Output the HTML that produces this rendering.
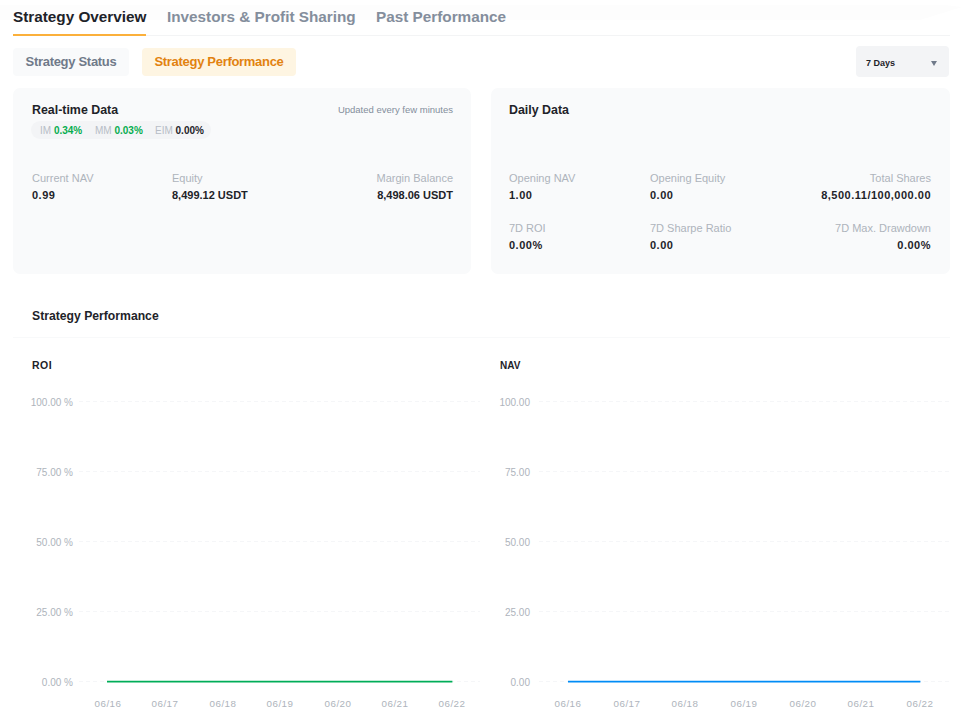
<!DOCTYPE html>
<html><head><meta charset="utf-8">
<style>
*{margin:0;padding:0;box-sizing:border-box}
html,body{width:962px;height:723px;overflow:hidden;background:#fff;font-family:"Liberation Sans",sans-serif;color:#1E2329}
.a{position:absolute;white-space:nowrap}
.tab{font-size:15.3px;font-weight:bold;top:7px;line-height:20px}
.btn{height:28px;border-radius:4px;font-size:13px;letter-spacing:-0.3px;font-weight:bold;line-height:28px;text-align:center;top:48px}
.card{background:#F9FAFB;border-radius:7px;top:88px;height:186px}
.ttl{font-size:12.4px;font-weight:bold;line-height:16px}
.lbl{font-size:11px;color:#AEB4BC;line-height:14px}
.val{font-size:11px;font-weight:bold;color:#1E2329;line-height:14px}
.num{letter-spacing:0.5px}
.r{text-align:right}
.ax{font-size:10px;color:#AEB4BC;line-height:12px;margin-top:2px}
.xl{font-size:9.8px;letter-spacing:0.45px;color:#AEB4BC;line-height:12px;width:40px;text-align:center;top:698px}
.grid{height:1px;background:repeating-linear-gradient(to right,#F5F6F8 0 4px,transparent 4px 7px)}
</style></head><body>
<div class="a" style="left:0;top:5px;width:962px;height:15px;background:#FDFDFD;clip-path:polygon(0 0,945px 0,962px 2px,920px 15px,0 15px)"></div>
<div class="a tab" style="left:13px;color:#1E2329">Strategy Overview</div>
<div class="a tab" style="left:167px;color:#848E9C">Investors &amp; Profit Sharing</div>
<div class="a tab" style="left:376px;color:#848E9C">Past Performance</div>
<div class="a" style="left:13px;top:35px;width:937px;height:1px;background:#F3F4F5"></div>
<div class="a" style="left:13px;top:34px;width:133px;height:2px;background:#FBB03B"></div>

<div class="a btn" style="left:13px;width:116px;background:#F9FAFB;color:#707A8A">Strategy Status</div>
<div class="a btn" style="left:142px;width:154px;background:#FEF5E2;color:#E2820F">Strategy Performance</div>

<div class="a" style="left:856px;top:46px;width:93px;height:31px;background:#F3F4F6;border-radius:4px"></div>
<div class="a" style="left:866px;top:57px;font-size:9px;font-weight:bold;line-height:12px">7 Days</div>
<div class="a" style="left:931px;top:60.5px;width:0;height:0;border-left:3.5px solid transparent;border-right:3.5px solid transparent;border-top:5px solid #707A8A"></div>

<!-- card 1 -->
<div class="a card" style="left:13px;width:458px"></div>
<div class="a ttl" style="left:32px;top:102px">Real-time Data</div>
<div class="a r" style="right:509px;top:104px;font-size:9.5px;color:#848E9C;line-height:12px">Updated every few minutes</div>
<div class="a" style="left:31px;top:121px;width:180px;height:18px;background:#F3F4F6;border-radius:9px"></div>
<div class="a" style="left:40px;top:125px;font-size:10px;line-height:12px"><span style="color:#B7BDC6">IM </span><span style="color:#06AD4F;font-weight:bold">0.34%</span></div>
<div class="a" style="left:95px;top:125px;font-size:10px;line-height:12px"><span style="color:#B7BDC6">MM </span><span style="color:#06AD4F;font-weight:bold">0.03%</span></div>
<div class="a" style="left:155px;top:125px;font-size:10px;line-height:12px"><span style="color:#B7BDC6">EIM </span><span style="color:#1E2329;font-weight:bold">0.00%</span></div>

<div class="a lbl" style="left:32px;top:171px">Current NAV</div>
<div class="a val num" style="left:32px;top:188px">0.99</div>
<div class="a lbl" style="left:172px;top:171px">Equity</div>
<div class="a val" style="left:172px;top:188px">8,499.12 USDT</div>
<div class="a lbl r" style="right:509px;top:171px">Margin Balance</div>
<div class="a val r" style="right:509px;top:188px">8,498.06 USDT</div>

<!-- card 2 -->
<div class="a card" style="left:491px;width:459px"></div>
<div class="a ttl" style="left:509px;top:102px">Daily Data</div>
<div class="a lbl" style="left:509px;top:171px">Opening NAV</div>
<div class="a val num" style="left:509px;top:188px">1.00</div>
<div class="a lbl" style="left:650px;top:171px">Opening Equity</div>
<div class="a val num" style="left:650px;top:188px">0.00</div>
<div class="a lbl r" style="right:31px;top:171px">Total Shares</div>
<div class="a val r num" style="right:31px;top:188px">8,500.11/100,000.00</div>
<div class="a lbl" style="left:509px;top:221px">7D ROI</div>
<div class="a val num" style="left:509px;top:238px">0.00%</div>
<div class="a lbl" style="left:650px;top:221px">7D Sharpe Ratio</div>
<div class="a val num" style="left:650px;top:238px">0.00</div>
<div class="a lbl r" style="right:31px;top:221px">7D Max. Drawdown</div>
<div class="a val r num" style="right:31px;top:238px">0.00%</div>

<!-- performance -->
<div class="a ttl" style="left:32px;top:308px;font-size:12.2px">Strategy Performance</div>
<div class="a" style="left:13px;top:337px;width:937px;height:1px;background:#F8F9FA"></div>
<div class="a" style="left:32px;top:359px;font-size:10.5px;letter-spacing:0.5px;font-weight:bold;line-height:13px">ROI</div>
<div class="a" style="left:500px;top:359px;font-size:10px;font-weight:bold;line-height:13px">NAV</div>

<!-- ROI chart -->
<div class="a ax r" style="right:889px;top:395px">100.00 %</div>
<div class="a ax r" style="right:889px;top:465px">75.00 %</div>
<div class="a ax r" style="right:889px;top:535px">50.00 %</div>
<div class="a ax r" style="right:889px;top:605px">25.00 %</div>
<div class="a ax r" style="right:889px;top:675px">0.00 %</div>
<div class="a grid" style="left:79px;top:401px;width:401px"></div>
<div class="a grid" style="left:79px;top:471px;width:401px"></div>
<div class="a grid" style="left:79px;top:541px;width:401px"></div>
<div class="a grid" style="left:79px;top:611px;width:401px"></div>
<div class="a grid" style="left:79px;top:681px;width:401px"></div>

<div class="a xl" style="left:88px">06/16</div>
<div class="a xl" style="left:145px">06/17</div>
<div class="a xl" style="left:203px">06/18</div>
<div class="a xl" style="left:260px">06/19</div>
<div class="a xl" style="left:318px">06/20</div>
<div class="a xl" style="left:375px">06/21</div>
<div class="a xl" style="left:432px">06/22</div>

<!-- NAV chart -->
<div class="a ax r" style="right:432px;top:395px">100.00</div>
<div class="a ax r" style="right:432px;top:465px">75.00</div>
<div class="a ax r" style="right:432px;top:535px">50.00</div>
<div class="a ax r" style="right:432px;top:605px">25.00</div>
<div class="a ax r" style="right:432px;top:675px">0.00</div>
<div class="a grid" style="left:539px;top:401px;width:411px"></div>
<div class="a grid" style="left:539px;top:471px;width:411px"></div>
<div class="a grid" style="left:539px;top:541px;width:411px"></div>
<div class="a grid" style="left:539px;top:611px;width:411px"></div>
<div class="a grid" style="left:539px;top:681px;width:411px"></div>

<div class="a xl" style="left:548px">06/16</div>
<div class="a xl" style="left:607px">06/17</div>
<div class="a xl" style="left:665px">06/18</div>
<div class="a xl" style="left:724px">06/19</div>
<div class="a xl" style="left:783px">06/20</div>
<div class="a xl" style="left:841px">06/21</div>
<div class="a xl" style="left:900px">06/22</div>
<svg class="a" style="left:0;top:670px" width="962" height="20"><line x1="107" y1="11.6" x2="452.4" y2="11.6" stroke="#00AD58" stroke-width="1.9"/><line x1="568" y1="11.6" x2="920.4" y2="11.6" stroke="#008CF6" stroke-width="1.9"/></svg>
</body></html>
